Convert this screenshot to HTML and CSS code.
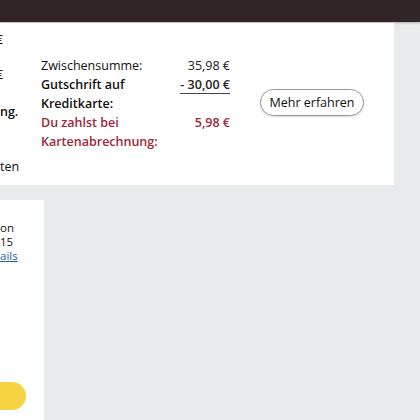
FILE: index.html
```html
<!DOCTYPE html>
<html>

<head>
    <title>Warenkorb</title>
    <link rel="stylesheet" href="styles.css">
</head>

<body>
    <div class="topbar"></div>

    <div class="row">
        <div class="panel">
            <div class="left-col">
                <div class="frag frag-euro">€</div>
                <div class="frag frag-euro2">€</div>
                <div class="frag frag-bold">ng.</div>
                <div class="frag frag-last">ten</div>
            </div>

            <div class="summary">
                <div class="label">Zwischensumme:</div>
                <div class="value">35,98 €</div>

                <div class="label bold">Gutschrift auf Kreditkarte:</div>
                <div class="value bold"><span class="credit">- 30,00 €</span></div>

                <div class="label bold red">Du zahlst bei Kartenabrechnung:</div>
                <div class="value bold red">5,98 €</div>
            </div>

            <div class="cta">
                <button class="more-button">Mehr erfahren</button>
            </div>
        </div>
        <div class="side-strip"></div>
    </div>

    <div class="card">
        <div class="card-line">on</div>
        <div class="card-line">15</div>
        <div class="card-line"><a href="#" class="details-link">ails</a></div>
        <div class="card-spacer"></div>
        <div class="buy-button"></div>
    </div>
</body>

</html>
```

FILE: styles.css
```css
body {
    margin: 0;
    font-family: "Open Sans", Arial, sans-serif;
    font-size: 12.5px;
    color: #0f1111;
    background-color: #e8ebec;
    height: 420px;
    overflow: hidden;
}

.topbar {
    height: 22px;
    background-color: #312526;
    box-shadow: 0 1px 2px rgba(0, 0, 0, 0.25);
}

.row {
    display: flex;
    height: 162px;
    margin-top: 1px;
}

.panel {
    width: 394px;
    background-color: #fff;
    display: flex;
}

.side-strip {
    width: 16px;
}

.left-col {
    width: 20px;
    overflow: hidden;
    padding-top: 8px;
    line-height: 18px;
    white-space: nowrap;
}

.frag-euro {
    margin-left: -4px;
}

.frag-euro2 {
    margin-top: 17px;
    margin-left: -4px;
}

.frag-bold {
    margin-top: 19px;
    font-weight: 600;
}

.frag-last {
    margin-top: 37px;
}

.summary {
    margin-left: 21px;
    width: 189px;
    padding-top: 33px;
    display: grid;
    grid-template-columns: 122px 1fr;
    grid-auto-rows: min-content;
    line-height: 19px;
}

.label {
    color: #111;
}

.value {
    text-align: right;
    color: #222;
}

.bold {
    font-weight: 600;
}

.red {
    color: #a0283a;
}

.credit {
    display: inline-block;
    line-height: 17px;
    border-bottom: 1.5px solid #444;
}

.cta {
    margin-left: 30px;
    padding-top: 66px;
}

.more-button {
    width: 104px;
    height: 27px;
    border: 1px solid #999;
    border-radius: 14px;
    background-color: #fff;
    box-shadow: 0 1px 2px rgba(15, 17, 17, 0.15);
    font-family: "Open Sans", Arial, sans-serif;
    font-size: 12.5px;
    color: #0f1111;
    padding: 0;
}

.card {
    margin-top: 15px;
    width: 44px;
    height: 220px;
    background-color: #fff;
    padding-top: 21px;
    box-sizing: border-box;
    font-size: 11.5px;
    line-height: 14px;
    overflow: hidden;
    white-space: nowrap;
}

.details-link {
    color: #2162a1;
}

.card-spacer {
    height: 119px;
}

.buy-button {
    width: 60px;
    height: 28px;
    margin-left: -34px;
    border-radius: 14px;
    background-color: #f6d343;
}
```
